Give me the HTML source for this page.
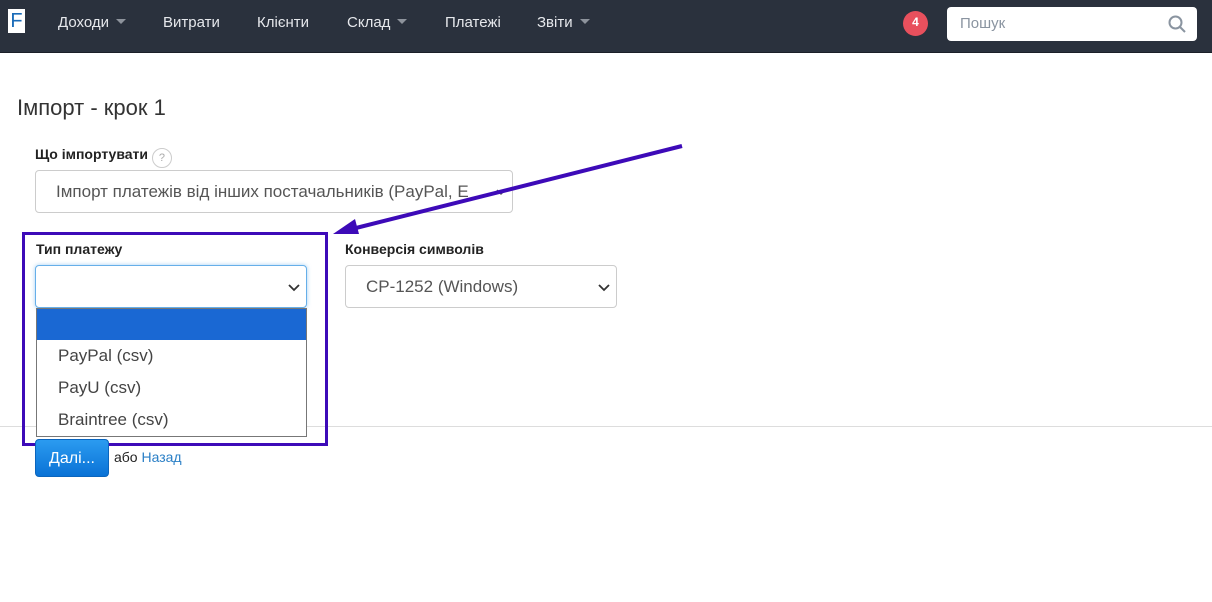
<!DOCTYPE html>
<html><head><meta charset="utf-8"><style>
*{box-sizing:border-box;margin:0;padding:0}
body{width:1212px;height:602px;background:#fff;font-family:"Liberation Sans",sans-serif;position:relative;overflow:hidden;color:#333}
.nav{position:absolute;left:0;top:0;width:1212px;height:53px;background:#2a313d;border-bottom:1px solid #1b2028}
.nav .it{position:absolute;top:14px;color:#e6e8ec;font-size:15px}
.caret{display:inline-block;width:0;height:0;border-left:5px solid transparent;border-right:5px solid transparent;border-top:5px solid #8d939c;margin-left:7px;vertical-align:3px}
.logo{position:absolute;left:8px;top:9px;width:17px;height:24px;background:#fff;color:#1a6bb8;font-size:20px;line-height:24px;text-align:center}
.badge{position:absolute;left:903px;top:11px;width:25px;height:25px;border-radius:50%;background:#e8505d;color:#fff;font-size:12px;font-weight:bold;text-align:center;line-height:23px}
.search{position:absolute;left:947px;top:7px;width:250px;height:34px;background:#fff;border-radius:4px}
.search span{position:absolute;left:13px;top:8px;color:#8a94a0;font-size:15px}
h1{position:absolute;left:17px;top:95px;font-weight:normal;font-size:22px;color:#333}
.lbl{position:absolute;font-size:14px;font-weight:bold;color:#222}
.sel{position:absolute;border:1px solid #ccc;border-radius:4px;background:#fff;font-size:17px;color:#555;padding-left:20px;line-height:42px;overflow:hidden;white-space:nowrap}
.chev{position:absolute;right:6px;top:16px}
</style></head><body>
<div class="nav">
<div class="logo">F</div>
<div class="it" style="left:58px">Доходи<span class="caret"></span></div>
<div class="it" style="left:163px">Витрати</div>
<div class="it" style="left:257px">Клієнти</div>
<div class="it" style="left:347px">Склад<span class="caret"></span></div>
<div class="it" style="left:445px">Платежі</div>
<div class="it" style="left:537px">Звіти<span class="caret"></span></div>
<div class="badge">4</div>
<div class="search"><span>Пошук</span>
<svg style="position:absolute;left:221px;top:8px" width="18" height="18" viewBox="0 0 18 18"><circle cx="7.5" cy="7.5" r="6" fill="none" stroke="#8a94a0" stroke-width="2"/><path d="M12 12l5 5" stroke="#8a94a0" stroke-width="2"/></svg></div>
</div>
<h1>Імпорт - крок 1</h1>
<div class="lbl" style="left:35px;top:146px">Що імпортувати <span style="display:inline-block;width:20px;height:20px;border:1px solid #ccc;border-radius:50%;font-size:11px;font-weight:normal;color:#aaa;text-align:center;line-height:18px;vertical-align:-2px">?</span></div>
<div class="sel" style="left:35px;top:170px;width:478px;height:43px">Імпорт платежів від інших постачальників (PayPal, E<svg class="chev" width="10" height="10" viewBox="0 0 10 10"><path d="M1 3l4 4 4-4" fill="none" stroke="#555" stroke-width="1.5"/></svg></div>
<div class="lbl" style="left:36px;top:241px">Тип платежу</div>
<div class="sel" style="left:35px;top:265px;width:272px;height:43px;border-color:#66afe9;box-shadow:0 0 4px rgba(102,175,233,.6)"><svg class="chev" width="12" height="10" viewBox="0 0 12 10"><path d="M1 3l5 5 5-5" fill="none" stroke="#333" stroke-width="1.8"/></svg></div>
<div class="lbl" style="left:345px;top:241px">Конверсія символів</div>
<div class="sel" style="left:345px;top:265px;width:272px;height:43px">CP-1252 (Windows)<svg class="chev" width="12" height="10" viewBox="0 0 12 10"><path d="M1 3l5 5 5-5" fill="none" stroke="#333" stroke-width="1.8"/></svg></div>
<div style="position:absolute;left:0;top:426px;width:1212px;height:1px;background:#ddd"></div>
<div style="position:absolute;left:36px;top:308px;width:271px;height:129px;border:1px solid #777;background:#fff;font-size:17px;color:#444">
<div style="height:31px;background:#1a68d3"></div>
<div style="padding-left:21px;line-height:32px">PayPal (csv)</div>
<div style="padding-left:21px;line-height:32px">PayU (csv)</div>
<div style="padding-left:21px;line-height:32px">Braintree (csv)</div>
</div>
<div style="position:absolute;left:22px;top:232px;width:306px;height:214px;border:3px solid #3d0ab8"></div>
<div style="position:absolute;left:35px;top:439px;width:74px;height:38px;border-radius:4px;background:linear-gradient(#2b9bf0,#0a72d6);border:1px solid #0b65bd;color:#fff;font-size:16px;padding:10px 0 0 13px">Далі...</div>
<div style="position:absolute;left:114px;top:449px;font-size:14px;color:#222">або <span style="color:#2a7fc6">Назад</span></div>
<svg style="position:absolute;left:0;top:0" width="1212" height="602"><path d="M682 146L352 229" stroke="#3d0ab8" stroke-width="4"/><path d="M333 234l22-15 4 15z" fill="#3d0ab8"/></svg>
</body></html>
